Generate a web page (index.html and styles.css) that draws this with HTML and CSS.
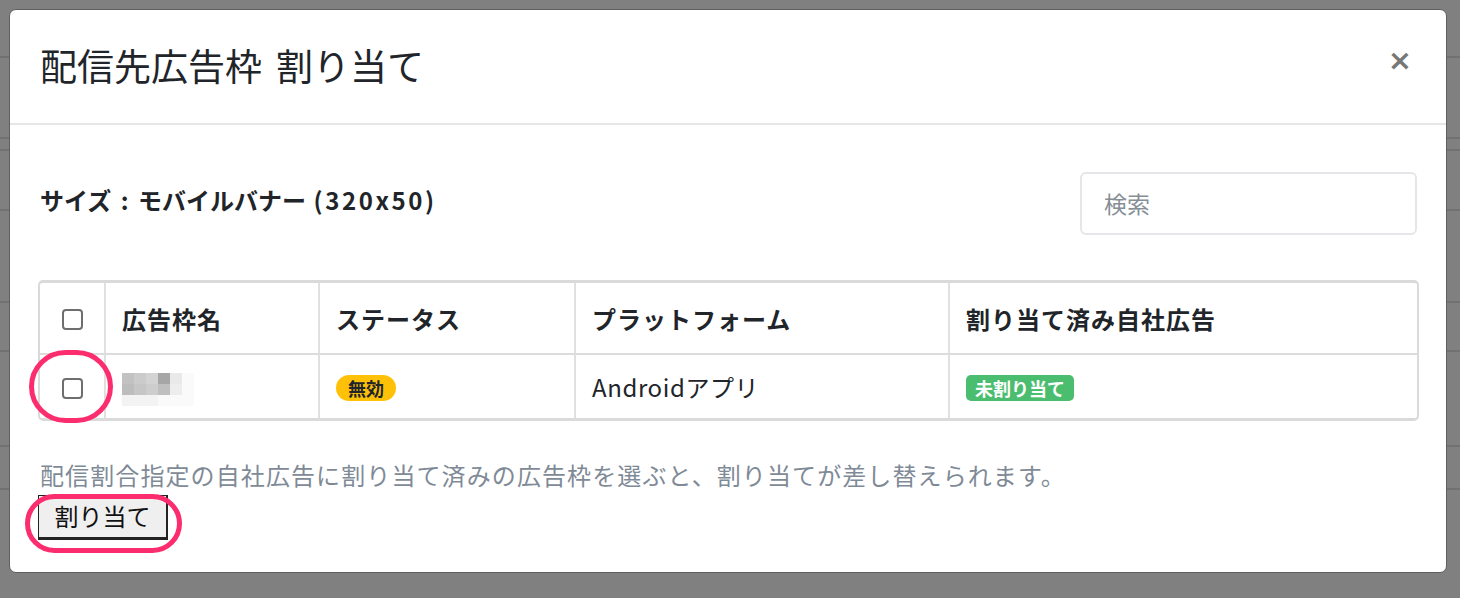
FILE: index.html
```html
<!DOCTYPE html>
<html lang="ja">
<head>
<meta charset="utf-8">
<title>配信先広告枠 割り当て</title>
<link rel="stylesheet" href="styles.css">
</head>
<body>
<div class="page">
  <div class="bg-line l1"></div>
  <div class="bg-line l2"></div>
  <div class="bg-line l3"></div>
  <div class="bg-line l4"></div>
  <div class="bg-line l5"></div>
  <div class="bg-line l6"></div>
  <div class="bg-line l7"></div>
  <div class="bg-line l8"></div>
</div>

<div class="modal">
  <div class="modal-header">
    <h5 class="modal-title">配信先広告枠<span class="gap"> </span>割り当て</h5>
    <button class="close" type="button">×</button>
  </div>
  <div class="modal-body">
    <div class="toolbar">
      <div class="size-label">サイズ <span class="colon">:</span> モバイルバナー <span class="latin">(320x50)</span></div>
      <div class="search">検索</div>
    </div>

    <div class="table-wrap">
      <table class="table">
        <thead>
          <tr>
            <th class="col-check"><span class="checkbox"></span></th>
            <th class="col-name">広告枠名</th>
            <th class="col-status">ステータス</th>
            <th class="col-platform">プラットフォーム</th>
            <th class="col-assigned">割り当て済み自社広告</th>
          </tr>
        </thead>
        <tbody>
          <tr>
            <td class="col-check"><span class="checkbox"></span></td>
            <td class="col-name">
              <div class="mosaic">
                <span class="m m1"></span><span class="m m2"></span><span class="m m3"></span><span class="m m4"></span><span class="m m5"></span><span class="m m6"></span>
                <span class="m m7"></span><span class="m m8"></span><span class="m m9"></span><span class="m m10"></span><span class="m m11"></span><span class="m m6"></span>
                <span class="m m12"></span><span class="m m12"></span><span class="m m12"></span><span class="m m6"></span><span class="m m6"></span><span class="m m6"></span>
              </div>
            </td>
            <td class="col-status"><span class="badge badge-warning">無効</span></td>
            <td class="col-platform"><span class="platform">Androidアプリ</span></td>
            <td class="col-assigned"><span class="badge badge-success">未割り当て</span></td>
          </tr>
        </tbody>
      </table>
    </div>

    <p class="note">配信割合指定の自社広告に割り当て済みの広告枠を選ぶと、割り当てが差し替えられます。</p>
    <button class="assign" type="button">割り当て</button>
  </div>

  <div class="ring ring-check"></div>
  <div class="ring ring-button"></div>
</div>
</body>
</html>
```

FILE: styles.css
```css
* {
  box-sizing: border-box;
}

html, body {
  margin: 0;
  padding: 0;
}

body {
  width: 1460px;
  height: 598px;
  overflow: hidden;
  background: #808080;
  font-family: "Noto Sans CJK JP", "Noto Sans", sans-serif;
  color: #212529;
  position: relative;
}

/* dimmed page behind the dialog */
.page {
  display: flex;
  flex-direction: column;
}

.bg-line {
  height: 2px;
  background: #717171;
}

.l1 { margin-top: 56px; }
.l2 { margin-top: 79px; }
.l3 { margin-top: 10px; }
.l4 { margin-top: 58px; }
.l5 { margin-top: 90px; }
.l6 { margin-top: 47px; }
.l7 { margin-top: 93px; }
.l8 { margin-top: 41px; }

/* dialog */
.modal {
  position: absolute;
  left: 9px;
  top: 9px;
  width: 1438px;
  height: 564px;
  background: #fff;
  border: 1px solid #5f5f5f;
  border-radius: 7px;
  display: flex;
  flex-direction: column;
}

.modal-header {
  height: 115px;
  flex: none;
  display: flex;
  align-items: center;
  justify-content: space-between;
  padding: 0 34px 0 30px;
  border-bottom: 2px solid #e6e6e9;
}

.modal-title {
  margin: 0;
  font-size: 37px;
  font-weight: 400;
  line-height: 1.2;
  color: #212529;
  padding-bottom: 2px;
}

.gap {
  display: inline-block;
  width: 14px;
}

.close {
  border: 0;
  background: transparent;
  padding: 0;
  margin-bottom: 12px;
  font-family: "DejaVu Sans", sans-serif;
  font-size: 29px;
  font-weight: 700;
  line-height: 1;
  color: #777;
}

.modal-body {
  padding: 47px 29px 0 28px;
  display: flex;
  flex-direction: column;
  align-items: flex-start;
}

.toolbar {
  width: 100%;
  display: flex;
  justify-content: space-between;
  align-items: flex-start;
}

.size-label {
  font-size: 24px;
  font-weight: 700;
  line-height: 56px;
  padding-left: 2px;
  color: #212529;
  word-spacing: 2px;
}

.colon {
  padding: 0 2px;
}

.latin {
  letter-spacing: 2.6px;
}

.search {
  width: 337px;
  height: 63px;
  border: 2px solid #e4e6ea;
  border-radius: 6px;
  padding: 0 22px;
  font-size: 23px;
  line-height: 59px;
  color: #868e96;
}

/* table */
.table-wrap {
  margin-top: 45px;
  width: 1381px;
  border: 2px solid #dadada;
  border-top-width: 3px;
  border-bottom-width: 3px;
  border-radius: 5px;
  overflow: hidden;
}

.table {
  width: 100%;
  border-collapse: collapse;
  table-layout: fixed;
}

.table th,
.table td {
  border-left: 2px solid #e0e0e0;
  padding: 0 16px;
  text-align: left;
  vertical-align: middle;
  font-size: 24px;
}

.table th:first-child,
.table td:first-child {
  border-left: 0;
}

.table th {
  height: 71px;
  font-weight: 700;
  border-bottom: 2px solid #dcdcdc;
  letter-spacing: 1px;
}

.table td {
  height: 64px;
  font-weight: 400;
}

.col-check { width: 65px; text-align: center !important; padding: 0 !important; }
.col-name { width: 214px; }
.col-status { width: 256px; }
.col-platform { width: 374px; }

.platform {
  letter-spacing: 0.6px;
}

.checkbox {
  display: inline-block;
  width: 21px;
  height: 21px;
  border: 2px solid #6e6e6e;
  border-radius: 4px;
  background: #fff;
  vertical-align: middle;
  margin-top: -4px;
}

.mosaic {
  display: grid;
  grid-template-columns: repeat(6, 12px);
  grid-auto-rows: 11px;
  width: 72px;
  margin-top: 6px;
}

.m1 { background: #c2c2c2; }
.m2 { background: #cbcbcb; }
.m3 { background: #d3d3d3; }
.m4 { background: #a6a6a6; }
.m5 { background: #e9e9e9; }
.m6 { background: #fafafa; }
.m7 { background: #bdbdbd; }
.m8 { background: #c6c6c6; }
.m9 { background: #cdcdcd; }
.m10 { background: #bfbfbf; }
.m11 { background: #ededed; }
.m12 { background: #f3f3f3; }

.badge {
  display: inline-block;
  font-size: 18px;
  font-weight: 700;
  line-height: 1;
  padding: 4px 12px 4px 12px;
  vertical-align: middle;
  margin-top: -4px;
}

.badge-warning {
  background: #ffc107;
  color: #212529;
  border-radius: 13px;
}

.badge-success {
  background: #4bbd6f;
  color: #fff;
  border-radius: 5px;
  padding: 4px 9px 4px 9px;
}

.note {
  margin: 36px 0 0 2px;
  font-size: 24px;
  line-height: 36px;
  color: #7f8a97;
  letter-spacing: 1.1px;
}

.assign {
  margin-top: 2px;
  width: 130px;
  height: 45px;
  background: #efefef;
  border: 1px solid #222;
  border-bottom-width: 3px;
  border-right-width: 2px;
  border-radius: 0;
  font-family: "Noto Sans CJK JP", sans-serif;
  font-size: 24px;
  line-height: 1;
  color: #111;
  padding: 0 0 2px 0;
}

/* annotation rings */
.ring {
  position: absolute;
  border: 5px solid #fb2d6e;
}

.ring-check {
  left: 19px;
  top: 340px;
  width: 84px;
  height: 73px;
  border-radius: 37px;
}

.ring-button {
  left: 15px;
  top: 484px;
  width: 157px;
  height: 59px;
  border-radius: 30px;
}
```
